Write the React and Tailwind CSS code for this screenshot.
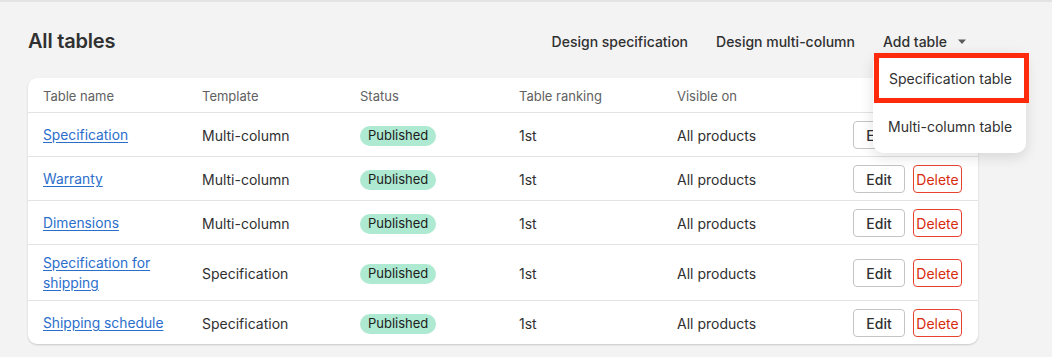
const rows = [
    { name: 'Specification', template: 'Multi-column' },
    { name: 'Warranty', template: 'Multi-column' },
    { name: 'Dimensions', template: 'Multi-column' },
    { name: 'Specification for shipping', template: 'Specification' },
    { name: 'Shipping schedule', template: 'Specification' },
];

const cols = 'grid grid-cols-[159px_158px_159px_158px_158px_1fr] items-center';

export default function App() {
    return (
        <div className="min-h-[357px] w-[1052px] border-t-2 border-[#e3e3e3] bg-[#f3f3f3] font-['Inter',sans-serif] text-[#303030]">
            <div className="relative px-[28px] pt-[20px]">
                <div className="flex h-[38px] w-[950px] items-center justify-between">
                    <h1 className="text-[20px] font-semibold tracking-[-0.2px] text-[#303030]">All tables</h1>
                    <div className="mr-[11px] flex items-center text-[14px] font-medium">
                        <button className="px-[14px]">Design specification</button>
                        <button className="px-[14px]">Design multi-column</button>
                        <button className="flex items-center gap-[10px] pl-[14px]">
                            Add table
                            <svg width="10" height="6" viewBox="0 0 10 6" className="mt-[1px]">
                                <path d="M1 0.5h8L5 5z" fill="#5c5c5c" />
                            </svg>
                        </button>
                    </div>
                </div>

                {/* dropdown */}
                <div className="absolute left-[873px] top-[51px] z-10 w-[153px] rounded-[10px] bg-white pb-[4px] shadow-[0_4px_14px_rgba(0,0,0,0.12)]">
                    <div className="relative flex h-[50px] items-center pl-[16px] text-[14px]">
                        <div className="absolute left-[1px] top-0 h-[50px] w-[155px] border-[5px] border-[#fe2a0c]"></div>
                        Specification table
                    </div>
                    <div className="flex h-[46px] items-center pl-[15px] text-[14px]">Multi-column table</div>
                </div>

                <div className="mt-[18px] w-[950px] overflow-hidden rounded-[9px] bg-white shadow-[0_1px_2px_rgba(0,0,0,0.18)]">
                    <div className={`${cols} h-[35px] border-b border-[#e3e3e3] pt-[3px] text-[13px] text-[#616161]`}>
                        <div className="pl-[15px]">Table name</div>
                        <div className="pl-[15px]">Template</div>
                        <div className="pl-[15px]">Status</div>
                        <div className="pl-[15px]">Table ranking</div>
                        <div className="pl-[15px]">Visible on</div>
                        <div></div>
                    </div>
                    {rows.map((r, i) => (
                        <div
                            key={r.name}
                            className={`${cols} pt-[8px] pb-[7px] text-[14px] ${i < rows.length - 1 ? 'border-b border-[#e3e3e3]' : ''}`}
                        >
                            <div className="pl-[15px] pr-[14px] text-[13.8px] leading-[20px]">
                                <a href="#" className="text-[#2c6ecb] underline underline-offset-2">{r.name}</a>
                            </div>
                            <div className="pl-[15px]">{r.template}</div>
                            <div className="pl-[15px]">
                                <span className="inline-flex h-[20px] items-center rounded-full bg-[#aee9d1] px-[8px] text-[13px] text-[#202020]">Published</span>
                            </div>
                            <div className="pl-[15px]">1st</div>
                            <div className="pl-[15px]">All products</div>
                            <div className="flex justify-end gap-[8px] pr-[16px]">
                                <button className="h-[28px] w-[52px] rounded-[4px] border border-[#c4c4c4] bg-white text-[14px] font-medium text-[#303030]">Edit</button>
                                <button className="h-[28px] w-[49px] rounded-[4px] border border-[#e5432f] bg-white text-[14px] text-[#d82c0d]">Delete</button>
                            </div>
                        </div>
                    ))}
                </div>
            </div>
        </div>
    );
}
